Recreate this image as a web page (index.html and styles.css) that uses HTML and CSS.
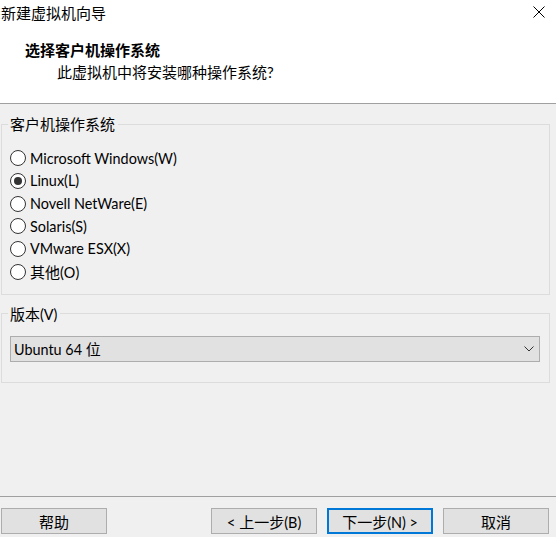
FILE: index.html
```html
<!DOCTYPE html>
<html lang="zh-CN">
<head>
<meta charset="utf-8">
<title>新建虚拟机向导</title>
<link rel="stylesheet" href="styles.css">
</head>
<body>
<div class="window">
  <div class="top">
    <div class="titlebar">
      <span class="title">新建虚拟机向导</span>
      <svg class="close" width="12" height="12" viewBox="0 0 12 12"><path d="M0.5 0.5 L11.5 11.5 M11.5 0.5 L0.5 11.5" stroke="#000" stroke-width="1" fill="none"/></svg>
    </div>
    <div class="head-title">选择客户机操作系统</div>
    <div class="head-sub">此虚拟机中将安装哪种操作系统?</div>
  </div>
  <div class="main">
    <fieldset class="group group-os">
      <legend>客户机操作系统</legend>
      <div class="radios">
        <div class="radio"><span class="circle"></span><span class="en">Microsoft Windows(W)</span></div>
        <div class="radio checked"><span class="circle"></span><span class="en">Linux(L)</span></div>
        <div class="radio"><span class="circle"></span><span class="en">Novell NetWare(E)</span></div>
        <div class="radio"><span class="circle"></span><span class="en">Solaris(S)</span></div>
        <div class="radio"><span class="circle"></span><span class="en">VMware ESX(X)</span></div>
        <div class="radio"><span class="circle"></span><span>其他<span class="en">(O)</span></span></div>
      </div>
    </fieldset>
    <fieldset class="group group-ver">
      <legend>版本<span class="en">(V)</span></legend>
      <div class="combo">
        <span><span class="en">Ubuntu 64</span> 位</span>
        <svg class="chev" width="10" height="6" viewBox="0 0 10 6"><path d="M0.5 0.5 L5 5 L9.5 0.5" stroke="#333" stroke-width="1" fill="none"/></svg>
      </div>
    </fieldset>
  </div>
  <div class="footer">
    <button class="btn">帮助</button>
    <div class="spacer"></div>
    <button class="btn">&lt; 上一步<span class="en">(B)</span></button>
    <button class="btn default">下一步<span class="en">(N) &gt;</span></button>
    <button class="btn">取消</button>
  </div>
</div>
</body>
</html>
```
FILE: styles.css
```css
html, body {
  margin: 0;
  padding: 0;
}
body {
  width: 556px;
  height: 537px;
  overflow: hidden;
  background: #f0f0f0;
  font-family: "Lato", "Noto Sans CJK SC", sans-serif;
  font-size: 15px;
  color: #000;
}
.en {
  font-size: 14.4px;
}
.window {
  display: flex;
  flex-direction: column;
  height: 537px;
}
.top {
  background: #fff;
  border-bottom: 1px solid #a0a0a0;
  box-sizing: border-box;
  height: 104px;
}
.titlebar {
  height: 26px;
  display: flex;
  align-items: center;
  justify-content: space-between;
  padding: 0 11px 0 1px;
}
.title {
  line-height: 26px;
}
.close {
  display: block;
  margin-top: -2px;
}
.head-title {
  margin-top: 14px;
  padding-left: 25px;
  line-height: 20px;
  font-weight: bold;
}
.head-sub {
  margin-top: 2px;
  padding-left: 57px;
  line-height: 20px;
}
.main {
  flex: 1;
  padding: 10px 6px 0 1px;
}
.group {
  margin: 0;
  border: 1px solid #dcdcdc;
  padding: 0 0 0 6px;
}
.group legend {
  padding: 0 3px 0 2px;
  line-height: 20px;
  height: 20px;
}
.radios {
  display: flex;
  flex-direction: column;
  margin-top: 13px;
  margin-bottom: 11px;
  padding-left: 2px;
}
.radio {
  height: 22.67px;
  display: flex;
  align-items: center;
  gap: 4px;
}
.circle {
  width: 14px;
  height: 14px;
  border: 1px solid #333;
  border-radius: 50%;
  background: #fff;
  display: flex;
  align-items: center;
  justify-content: center;
  flex: none;
}
.radio.checked .circle::after {
  content: "";
  width: 8px;
  height: 8px;
  border-radius: 50%;
  background: #333;
}
.group-ver {
  margin-top: 9px;
}
.combo {
  margin: 12px 9px 20px 2px;
  height: 26px;
  box-sizing: border-box;
  border: 1px solid #adadad;
  background: #e1e1e1;
  display: flex;
  align-items: center;
  justify-content: space-between;
  padding: 0 5px 0 3px;
}
.chev {
  display: block;
}
.footer {
  border-top: 1px solid #a0a0a0;
  padding: 11px 7px 3px 1px;
  display: flex;
  gap: 10px;
  height: 26px;
}
.spacer {
  flex: 1;
}
.btn {
  width: 106px;
  height: 26px;
  box-sizing: border-box;
  border: 1px solid #adadad;
  background: #e1e1e1;
  font-family: inherit;
  font-size: 15px;
  color: #000;
  padding: 0;
  margin: 0;
}
.btn.default {
  border: 2px solid #0078d7;
}
```
